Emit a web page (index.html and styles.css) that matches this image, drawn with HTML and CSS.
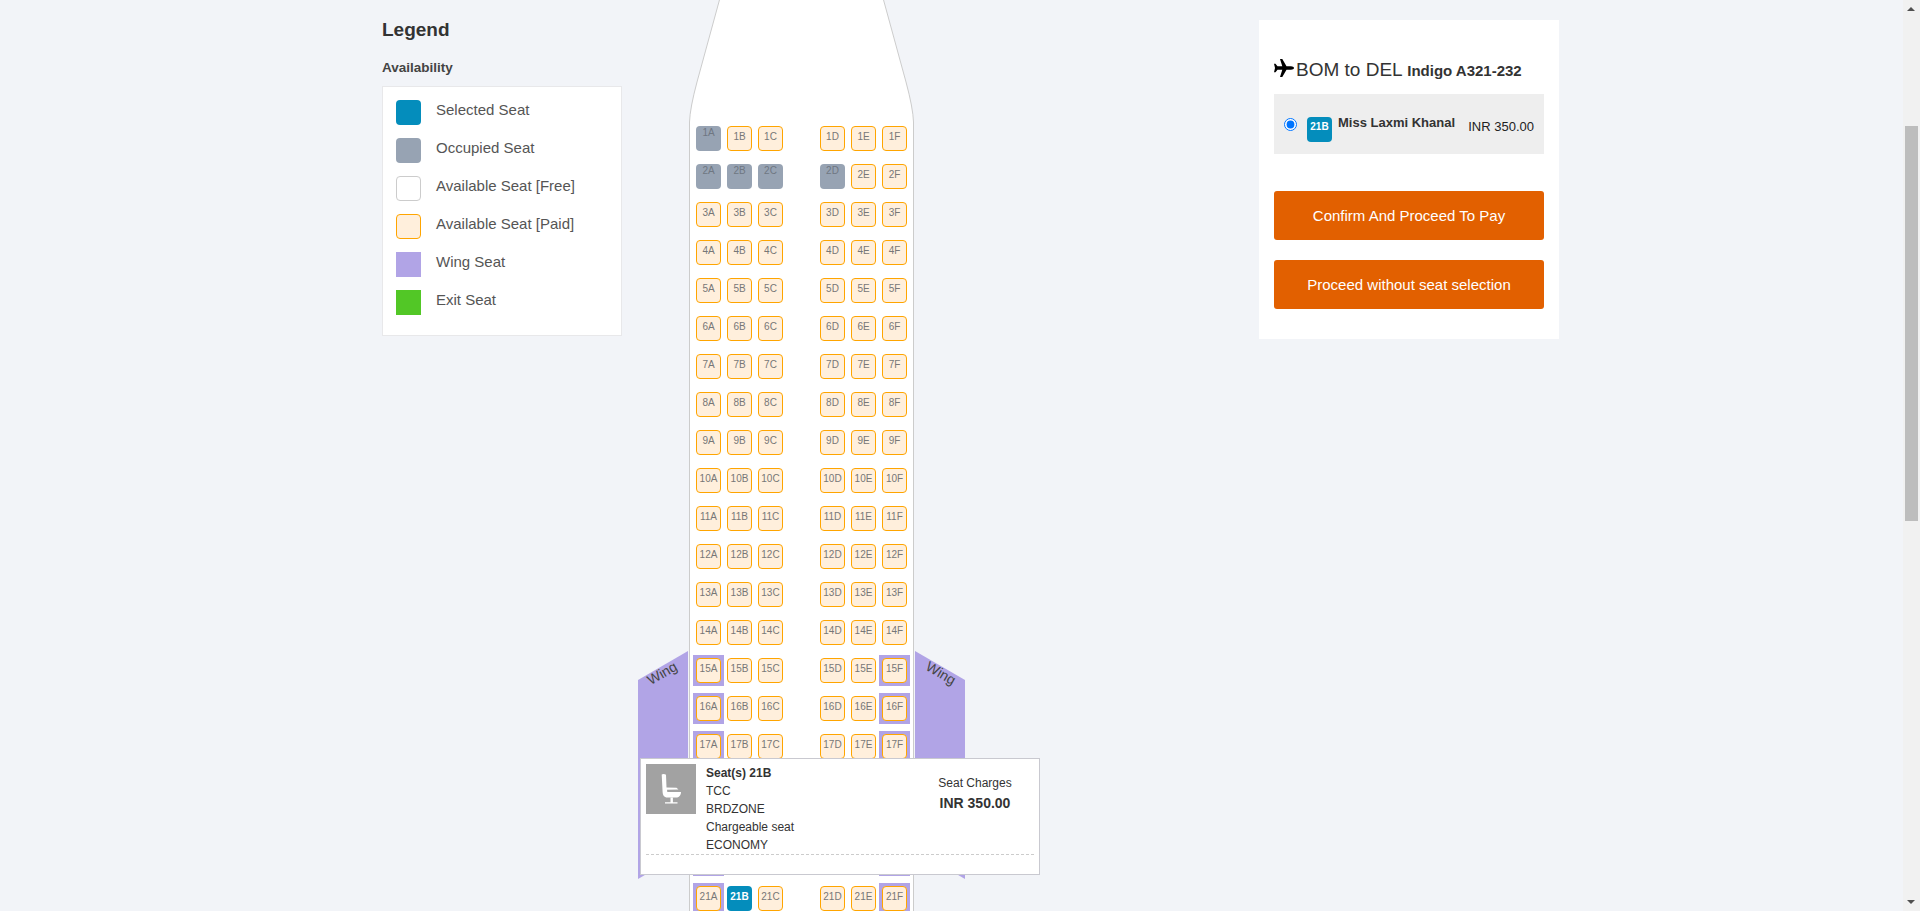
FILE: index.html
```html
<!DOCTYPE html>
<html lang="en">
<head>
<meta charset="utf-8">
<title>Seat selection</title>
<link rel="stylesheet" href="styles.css">
</head>
<body>
<div class="page">
  <main class="content">
    <section class="legend">
      <h2 class="legend-title">Legend</h2>
      <h3 class="legend-sub">Availability</h3>
      <ul class="legend-card">
        <li class="legend-row"><span class="swatch sw-selected"></span>Selected Seat</li>
        <li class="legend-row"><span class="swatch sw-occupied"></span>Occupied Seat</li>
        <li class="legend-row"><span class="swatch sw-free"></span>Available Seat [Free]</li>
        <li class="legend-row"><span class="swatch sw-paid"></span>Available Seat [Paid]</li>
        <li class="legend-row"><span class="swatch sw-wing"></span>Wing Seat</li>
        <li class="legend-row"><span class="swatch sw-exit"></span>Exit Seat</li>
      </ul>
    </section>

    <section class="cabin">
      <svg class="nose" width="225" height="122" viewBox="0 0 225 122"><path d="M31 -2L8 82Q1 108 .5 122H224.500Q224 108 217 82L194 -2Z" fill="#fff"/><path d="M31 -2L8 82Q1 108 .5 122M194 -2L217 82Q224 108 224.500 122" fill="none" stroke="#ccc"/></svg>
      <div class="seats">
        <div class="row"><div class="cell"><span class="seat occ">1A</span></div><div class="cell"><span class="seat">1B</span></div><div class="cell"><span class="seat">1C</span></div><div class="cell"><span class="seat">1D</span></div><div class="cell"><span class="seat">1E</span></div><div class="cell"><span class="seat">1F</span></div></div>
        <div class="row"><div class="cell"><span class="seat occ">2A</span></div><div class="cell"><span class="seat occ">2B</span></div><div class="cell"><span class="seat occ">2C</span></div><div class="cell"><span class="seat occ">2D</span></div><div class="cell"><span class="seat">2E</span></div><div class="cell"><span class="seat">2F</span></div></div>
        <div class="row"><div class="cell"><span class="seat">3A</span></div><div class="cell"><span class="seat">3B</span></div><div class="cell"><span class="seat">3C</span></div><div class="cell"><span class="seat">3D</span></div><div class="cell"><span class="seat">3E</span></div><div class="cell"><span class="seat">3F</span></div></div>
        <div class="row"><div class="cell"><span class="seat">4A</span></div><div class="cell"><span class="seat">4B</span></div><div class="cell"><span class="seat">4C</span></div><div class="cell"><span class="seat">4D</span></div><div class="cell"><span class="seat">4E</span></div><div class="cell"><span class="seat">4F</span></div></div>
        <div class="row"><div class="cell"><span class="seat">5A</span></div><div class="cell"><span class="seat">5B</span></div><div class="cell"><span class="seat">5C</span></div><div class="cell"><span class="seat">5D</span></div><div class="cell"><span class="seat">5E</span></div><div class="cell"><span class="seat">5F</span></div></div>
        <div class="row"><div class="cell"><span class="seat">6A</span></div><div class="cell"><span class="seat">6B</span></div><div class="cell"><span class="seat">6C</span></div><div class="cell"><span class="seat">6D</span></div><div class="cell"><span class="seat">6E</span></div><div class="cell"><span class="seat">6F</span></div></div>
        <div class="row"><div class="cell"><span class="seat">7A</span></div><div class="cell"><span class="seat">7B</span></div><div class="cell"><span class="seat">7C</span></div><div class="cell"><span class="seat">7D</span></div><div class="cell"><span class="seat">7E</span></div><div class="cell"><span class="seat">7F</span></div></div>
        <div class="row"><div class="cell"><span class="seat">8A</span></div><div class="cell"><span class="seat">8B</span></div><div class="cell"><span class="seat">8C</span></div><div class="cell"><span class="seat">8D</span></div><div class="cell"><span class="seat">8E</span></div><div class="cell"><span class="seat">8F</span></div></div>
        <div class="row"><div class="cell"><span class="seat">9A</span></div><div class="cell"><span class="seat">9B</span></div><div class="cell"><span class="seat">9C</span></div><div class="cell"><span class="seat">9D</span></div><div class="cell"><span class="seat">9E</span></div><div class="cell"><span class="seat">9F</span></div></div>
        <div class="row"><div class="cell"><span class="seat">10A</span></div><div class="cell"><span class="seat">10B</span></div><div class="cell"><span class="seat">10C</span></div><div class="cell"><span class="seat">10D</span></div><div class="cell"><span class="seat">10E</span></div><div class="cell"><span class="seat">10F</span></div></div>
        <div class="row"><div class="cell"><span class="seat">11A</span></div><div class="cell"><span class="seat">11B</span></div><div class="cell"><span class="seat">11C</span></div><div class="cell"><span class="seat">11D</span></div><div class="cell"><span class="seat">11E</span></div><div class="cell"><span class="seat">11F</span></div></div>
        <div class="row"><div class="cell"><span class="seat">12A</span></div><div class="cell"><span class="seat">12B</span></div><div class="cell"><span class="seat">12C</span></div><div class="cell"><span class="seat">12D</span></div><div class="cell"><span class="seat">12E</span></div><div class="cell"><span class="seat">12F</span></div></div>
        <div class="row"><div class="cell"><span class="seat">13A</span></div><div class="cell"><span class="seat">13B</span></div><div class="cell"><span class="seat">13C</span></div><div class="cell"><span class="seat">13D</span></div><div class="cell"><span class="seat">13E</span></div><div class="cell"><span class="seat">13F</span></div></div>
        <div class="row"><div class="cell"><span class="seat">14A</span></div><div class="cell"><span class="seat">14B</span></div><div class="cell"><span class="seat">14C</span></div><div class="cell"><span class="seat">14D</span></div><div class="cell"><span class="seat">14E</span></div><div class="cell"><span class="seat">14F</span></div></div>
        <div class="row"><div class="cell wing"><span class="seat">15A</span></div><div class="cell"><span class="seat">15B</span></div><div class="cell"><span class="seat">15C</span></div><div class="cell"><span class="seat">15D</span></div><div class="cell"><span class="seat">15E</span></div><div class="cell wing"><span class="seat">15F</span></div></div>
        <div class="row"><div class="cell wing"><span class="seat">16A</span></div><div class="cell"><span class="seat">16B</span></div><div class="cell"><span class="seat">16C</span></div><div class="cell"><span class="seat">16D</span></div><div class="cell"><span class="seat">16E</span></div><div class="cell wing"><span class="seat">16F</span></div></div>
        <div class="row"><div class="cell wing"><span class="seat">17A</span></div><div class="cell"><span class="seat">17B</span></div><div class="cell"><span class="seat">17C</span></div><div class="cell"><span class="seat">17D</span></div><div class="cell"><span class="seat">17E</span></div><div class="cell wing"><span class="seat">17F</span></div></div>
        <div class="row"><div class="cell wing"><span class="seat"></span></div><div class="cell"><span class="seat"></span></div><div class="cell"><span class="seat"></span></div><div class="cell"><span class="seat"></span></div><div class="cell"><span class="seat"></span></div><div class="cell wing"><span class="seat"></span></div></div>
        <div class="row"><div class="cell wing"><span class="seat"></span></div><div class="cell"><span class="seat"></span></div><div class="cell"><span class="seat"></span></div><div class="cell"><span class="seat"></span></div><div class="cell"><span class="seat"></span></div><div class="cell wing"><span class="seat"></span></div></div>
        <div class="row"><div class="cell wing"><span class="seat"></span></div><div class="cell"><span class="seat"></span></div><div class="cell"><span class="seat"></span></div><div class="cell"><span class="seat"></span></div><div class="cell"><span class="seat"></span></div><div class="cell wing"><span class="seat"></span></div></div>
        <div class="row"><div class="cell wing"><span class="seat">21A</span></div><div class="cell"><span class="seat sel">21B</span></div><div class="cell"><span class="seat">21C</span></div><div class="cell"><span class="seat">21D</span></div><div class="cell"><span class="seat">21E</span></div><div class="cell wing"><span class="seat">21F</span></div></div>
      </div>

      <div class="wing-panel wing-left"><span class="wing-label">Wing</span></div>
      <div class="wing-panel wing-right"><span class="wing-label">Wing</span></div>

      <div class="tip">
        <div class="tip-top">
          <div class="tip-photo">
            <svg width="50" height="50" viewBox="0 0 50 50"><path d="M15.700 10.500C16.500 9.800 19 9.800 20 10.800L20.500 23.500L30.500 23.800L32.500 25.500L21 25.800L21.300 28L35 28C35 31.500 33 33.500 30 33.500L21.500 33.500C18 33.500 16.800 31 16.600 28Z" fill="#fff"/><path d="M24.500 33.500h2.400v5h-2.400zM19 38.300h12.500v1.200H19z" fill="#fff"/></svg>
          </div>
          <div class="tip-info">
            <strong class="tip-name">Seat(s) 21B</strong>
            <span>TCC</span>
            <span>BRDZONE</span>
            <span>Chargeable seat</span>
            <span>ECONOMY</span>
          </div>
          <div class="tip-charge">
            <span>Seat Charges</span>
            <strong class="tip-price">INR 350.00</strong>
          </div>
        </div>
      </div>
    </section>

    <aside class="summary">
      <h2 class="route"><svg class="plane" width="20" height="18" viewBox="0 0 20 18"><path d="M20 9C20 8 18.500 7.300 17 7.300L12.500 7.300L8.300 0L6 0L8.300 7.300L3.500 7.300L1.500 4.800L0 4.800L1 9L0 13.200L1.500 13.200L3.500 10.700L8.300 10.700L6 18L8.300 18L12.500 10.700L17 10.700C18.500 10.700 20 10 20 9Z" fill="#000"/></svg>BOM to DEL <b class="craft">Indigo A321-232</b></h2>
      <label class="pax">
        <input class="pax-radio" type="radio" name="pax" checked>
        <span class="pax-seat">21B</span>
        <span class="pax-name">Miss Laxmi Khanal</span>
        <span class="pax-price">INR 350.00</span>
      </label>
      <button class="cta cta-first" type="button">Confirm And Proceed To Pay</button>
      <button class="cta" type="button">Proceed without seat selection</button>
    </aside>
  </main>
  <div class="scrollbar">
    <span class="sb-arrow sb-up"></span>
    <span class="sb-thumb"></span>
    <span class="sb-arrow sb-down"></span>
  </div>
</div>
</body>
</html>
```

FILE: styles.css
```css
* { box-sizing: border-box; }
html, body { margin: 0; padding: 0; height: 911px; overflow: hidden; }
body { background: #f2f4f8; color: #333; font-family: "Liberation Sans", Arial, sans-serif; }

.page { display: flex; height: 911px; }
.content { flex: 1; display: flex; align-items: flex-start; height: 911px; overflow: hidden; padding-left: 382px; }

/* Legend */
.legend { width: 240px; padding-top: 19px; flex: none; }
.legend-title { margin: 0 0 18px; font-size: 19px; line-height: 22px; font-weight: 700; color: #333; }
.legend-sub { margin: 0 0 9px; font-size: 13.500px; line-height: 18px; font-weight: 700; color: #444; }
.legend-card { list-style: none; margin: 0; padding: 13px 13px 7px; background: #fff; border: 1px solid #e8e8ea; height: 250px; }
.legend-row { display: flex; gap: 15px; height: 25px; margin-bottom: 13px; font-size: 15px; line-height: 20px; color: #555; }
.swatch { width: 25px; height: 25px; flex: none; }
.sw-selected { background: #048dbc; border-radius: 4px; }
.sw-occupied { background: #97a3b3; border-radius: 4px; }
.sw-free { background: #fff; border: 1px solid #ccc; border-radius: 4px; }
.sw-paid { background: #ffefdc; border: 1px solid #ffa500; border-radius: 4px; }
.sw-wing { background: #b1a4e6; }
.sw-exit { background: #52c726; }

/* Cabin */
.cabin { position: relative; width: 225px; margin-left: 67px; flex: none; }
.nose { display: block; }
.seats { background: #fff; border-left: 1px solid #ccc; border-right: 1px solid #ccc; padding: 4px 0 0 6px; }
.row { display: flex; gap: 6px; margin-bottom: 13px; }
.cell { width: 25px; height: 25px; flex: none; }
.cell:nth-child(3) { margin-right: 31px; }
.cell.wing { background: #b1a4e6; box-shadow: 0 0 0 3px #b1a4e6; }
.seat { display: block; width: 25px; height: 25px; border: 1px solid #ffa500; border-radius: 4px; background: #ffefdc; color: #777; font-size: 10px; line-height: 20px; text-align: center; }
.seat.occ { background: #97a3b3; border: 0; color: #6f7782; line-height: 13px; }
.seat.sel { background: #048dbc; border: 0; color: #fff; font-weight: 700; line-height: 21px; }

.wing-panel { position: absolute; top: 651px; width: 50px; height: 228px; background: #b1a4e6; }
.wing-left { left: -51px; clip-path: polygon(0 29px, 100% 0, 100% 199px, 0 100%); }
.wing-right { left: 226px; clip-path: polygon(0 0, 100% 29px, 100% 100%, 0 199px); }
.wing-label { position: absolute; top: 14px; width: 40px; font-size: 14px; line-height: 16px; text-align: center; color: #444; }
.wing-left .wing-label { left: 4px; transform: rotate(-30deg); }
.wing-right .wing-label { left: 6px; transform: rotate(30deg); }

/* Tooltip */
.tip { position: absolute; left: -49px; top: 758px; width: 400px; height: 117px; background: #fff; border: 1px solid #c9c9d0; padding: 5px 5px 0; font-size: 12px; line-height: 18px; color: #333; }
.tip-top { display: flex; height: 91px; border-bottom: 1px dashed #ccc; }
.tip-photo { width: 50px; height: 50px; background: #a2a2a2; flex: none; margin-right: 10px; }
.tip-photo svg { display: block; }
.tip-info { display: flex; flex-direction: column; flex: 1; }
.tip-name { font-weight: 700; }
.tip-charge { width: 118px; display: flex; flex-direction: column; align-items: center; padding-top: 10px; }
.tip-price { font-size: 14px; line-height: 20px; margin-top: 1px; font-weight: 700; }

/* Summary */
.summary { width: 300px; flex: none; margin-left: 345px; margin-top: 20px; padding: 36px 15px 30px; background: #fff; }
.route { height: 28px; margin: 0 0 10px; font-size: 19px; line-height: 28px; font-weight: 400; color: #333; white-space: nowrap; }
.plane { vertical-align: -1px; margin-right: 2px; }
.craft { font-size: 15px; font-weight: 700; }
.pax { display: flex; align-items: flex-start; height: 60px; background: #eee; padding-left: 10px; }
.pax-radio { width: 13px; height: 13px; margin: 24px 10px 0 0; flex: none; }
.pax-seat { width: 25px; height: 25px; margin-top: 23px; margin-right: 6px; flex: none; background: #048dbc; border-radius: 4px; color: #fff; font-size: 10px; font-weight: 700; line-height: 20px; text-align: center; }
.pax-name { margin-top: 21px; font-size: 13px; line-height: 16px; font-weight: 700; color: #333; white-space: nowrap; }
.pax-price { margin-left: auto; margin-right: 10px; margin-top: 25px; font-size: 13px; line-height: 16px; color: #222; white-space: nowrap; }
.cta { display: block; width: 100%; height: 49px; margin: 20px 0 0; padding: 0; border: 0; border-radius: 3px; background: #e26000; color: #fff; font-family: inherit; font-size: 15px; }
.cta-first { margin-top: 37px; }

/* Scrollbar */
.scrollbar { width: 17px; flex: none; height: 911px; background: #f1f1f1; display: flex; flex-direction: column; align-items: center; }
.sb-arrow { width: 17px; height: 17px; flex: none; position: relative; }
.sb-arrow::after { content: ""; position: absolute; left: 4px; border-left: 4.500px solid transparent; border-right: 4.500px solid transparent; }
.sb-up::after { top: 7px; border-bottom: 4px solid #505050; }
.sb-down::after { bottom: 7px; border-top: 4px solid #505050; }
.sb-thumb { width: 13px; height: 395px; margin-top: 109px; margin-bottom: auto; background: #bdbdbd; }
```
